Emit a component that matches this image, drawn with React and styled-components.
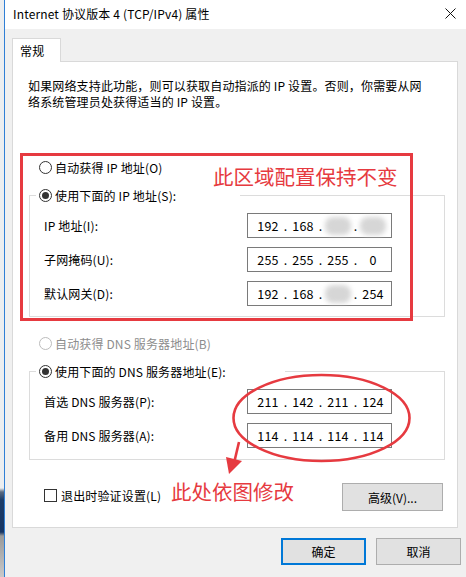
import React from "react";
import styled, { createGlobalStyle } from "styled-components";

const GlobalStyle = createGlobalStyle`
  html, body {
    margin: 0;
    padding: 0;
    background: #f0f0f0;
  }
  body {
    font-family: "Noto Sans CJK SC", "Noto Sans", sans-serif;
    font-size: 12px;
    letter-spacing: 0.15px;
    color: #000;
  }
`;

const RED = "#e63a40";

const Screen = styled.div`
  position: relative;
  display: flex;
  width: 466px;
  height: 577px;
  overflow: hidden;
`;

const DesktopEdge = styled.div`
  width: 4px;
  flex-shrink: 0;
  background: linear-gradient(
    to bottom,
    #eceef0 0px,
    #eceef0 488px,
    #5a6a80 492px,
    #1c3c68 500px,
    #163563 532px,
    #9a9a9a 536px,
    #c9c9c9 577px
  );
`;

const Window = styled.div`
  flex: 1;
  display: flex;
  flex-direction: column;
  border-left: 1px solid #2f7fd6;
  background: #f0f0f0;
`;

const TitleBar = styled.div`
  height: 29px;
  flex-shrink: 0;
  display: flex;
  align-items: center;
  justify-content: space-between;
  padding: 0 8px 0 8px;
  background: #fff;
`;

const Title = styled.span`
  font-size: 12px;
  line-height: 16px;
  margin-top: -1px;
`;

const CloseIcon = styled.svg`
  width: 11px;
  height: 11px;
  margin-right: 2px;
  margin-top: -2px;
`;

const Body = styled.div`
  padding: 9px 8px 0 7px;
  display: flex;
  flex-direction: column;
`;

const TabStrip = styled.div`
  display: flex;
`;

const Tab = styled.div`
  position: relative;
  z-index: 1;
  width: 49px;
  height: 24px;
  margin-bottom: -1px;
  padding-left: 7px;
  box-sizing: border-box;
  display: flex;
  align-items: center;
  border: 1px solid #d9d9d9;
  border-bottom: none;
  background: #fff;
  font-size: 12px;
`;

const Panel = styled.div`
  background: #fff;
  border: 1px solid #d9d9d9;
  padding: 17px 12px 16px 16px;
  display: flex;
  flex-direction: column;
`;

const Description = styled.p`
  margin: -1px 0 0 -1px;
  font-size: 12px;
  line-height: 16px;
`;

const RadioRow = styled.label`
  display: flex;
  align-items: center;
  gap: 3px;
  height: 20px;
  margin: ${(p) => p.$top}px 0 0 10px;
  color: ${(p) => (p.$disabled ? "#8d8d8d" : "#000")};
  white-space: nowrap;
`;

const RadioDot = styled.span`
  width: 13px;
  height: 13px;
  box-sizing: border-box;
  border-radius: 50%;
  border: 1px solid ${(p) => (p.$disabled ? "#bcbcbc" : "#333")};
  background: #fff;
  display: flex;
  align-items: center;
  justify-content: center;
  flex-shrink: 0;

  &::after {
    content: "";
    width: 7px;
    height: 7px;
    border-radius: 50%;
    background: #333;
    display: ${(p) => (p.$checked ? "block" : "none")};
  }
`;

const Group = styled.fieldset`
  margin: 8px 0 0 0;
  padding: 8px 52px ${(p) => p.$bottom}px 14px;
  border: 1px solid #dcdcdc;
  min-width: 0;
  display: flex;
  flex-direction: column;
  gap: 9px;
`;

const Legend = styled.legend`
  width: ${(p) => p.$width}px;
  box-sizing: border-box;
  padding: 0 0 0 3px;
  margin-left: -8px;
  height: 20px;
`;

const LegendRadio = styled(RadioRow)`
  margin: 0;
`;

const FieldRow = styled.div`
  display: flex;
  align-items: center;
  justify-content: space-between;
  height: 25px;
`;

const FieldLabel = styled.span`
  white-space: nowrap;
`;

const IpBox = styled.div`
  width: 145px;
  height: 25px;
  box-sizing: border-box;
  border: 1px solid #7a7a7a;
  background: #fff;
  display: flex;
  align-items: center;
  padding-left: 7px;
  font-size: 12.5px;
`;

const Octet = styled.span`
  width: 26px;
  text-align: center;
  position: relative;
  display: flex;
  justify-content: center;
`;

const Dot = styled.span`
  width: 9px;
  text-align: center;
`;

const Smudge = styled.span`
  display: block;
  width: 27px;
  height: 18px;
  border-radius: 8px;
  background: #d6d6d6;
  filter: blur(2.5px);
`;

const BottomRow = styled.div`
  display: flex;
  justify-content: space-between;
  align-items: flex-start;
  margin: 23px 2px 0 15px;
`;

const CheckRow = styled.label`
  display: flex;
  align-items: center;
  gap: 4px;
  height: 16px;
  margin-top: 4px;
  white-space: nowrap;
`;

const CheckBox = styled.span`
  width: 13px;
  height: 13px;
  box-sizing: border-box;
  border: 1px solid #333;
  background: #fff;
  flex-shrink: 0;
`;

const Button = styled.button`
  width: ${(p) => p.$width}px;
  height: ${(p) => p.$height}px;
  box-sizing: border-box;
  background: #e1e1e1;
  border: ${(p) => (p.$primary ? "2px solid #0078d7" : "1px solid #adadad")};
  font-family: inherit;
  font-size: 12px;
  color: #000;
  padding: 0;
`;

const Footer = styled.div`
  display: flex;
  justify-content: flex-end;
  gap: 10px;
  margin: 10px -3px 0 0;
`;

/* annotations drawn on top of the screenshot */
const MarkBox = styled.div`
  position: absolute;
  left: 20px;
  top: 153px;
  width: 393px;
  height: 168px;
  box-sizing: border-box;
  border: 3px solid ${RED};
  pointer-events: none;
`;

const Note = styled.span`
  position: absolute;
  left: ${(p) => p.$x}px;
  top: ${(p) => p.$y}px;
  font-size: 20.5px;
  line-height: 24px;
  letter-spacing: 0;
  color: ${RED};
  white-space: nowrap;
  pointer-events: none;
`;

const Marks = styled.svg`
  position: absolute;
  left: 0;
  top: 0;
  pointer-events: none;
`;

const Ip = ({ parts }) => (
  <IpBox>
    {parts.map((p, i) => (
      <React.Fragment key={i}>
        {i > 0 && <Dot>.</Dot>}
        <Octet>{p === null ? <Smudge /> : p}</Octet>
      </React.Fragment>
    ))}
  </IpBox>
);

export default function App() {
  return (
    <>
      <GlobalStyle />
      <Screen>
        <DesktopEdge />
        <Window>
          <TitleBar>
            <Title>Internet 协议版本 4 (TCP/IPv4) 属性</Title>
            <CloseIcon viewBox="0 0 11 11">
              <path d="M0.5 0.5L10.5 10.5M10.5 0.5L0.5 10.5" stroke="#111" strokeWidth="1" />
            </CloseIcon>
          </TitleBar>
          <Body>
            <TabStrip>
              <Tab>常规</Tab>
            </TabStrip>
            <Panel>
              <Description>
                如果网络支持此功能，则可以获取自动指派的 IP 设置。否则，你需要从网
                <br />
                络系统管理员处获得适当的 IP 设置。
              </Description>

              <RadioRow $top={47}>
                <RadioDot />
                自动获得 IP 地址(O)
              </RadioRow>
              <Group $bottom={10}>
                <Legend $width={204}>
                  <LegendRadio>
                    <RadioDot $checked />
                    使用下面的 IP 地址(S):
                  </LegendRadio>
                </Legend>
                <FieldRow>
                  <FieldLabel>IP 地址(I):</FieldLabel>
                  <Ip parts={["192", "168", null, null]} />
                </FieldRow>
                <FieldRow>
                  <FieldLabel>子网掩码(U):</FieldLabel>
                  <Ip parts={["255", "255", "255", "0"]} />
                </FieldRow>
                <FieldRow>
                  <FieldLabel>默认网关(D):</FieldLabel>
                  <Ip parts={["192", "168", null, "254"]} />
                </FieldRow>
              </Group>

              <RadioRow $top={16} $disabled>
                <RadioDot $disabled />
                自动获得 DNS 服务器地址(B)
              </RadioRow>
              <Group $bottom={11}>
                <Legend $width={249}>
                  <LegendRadio>
                    <RadioDot $checked />
                    使用下面的 DNS 服务器地址(E):
                  </LegendRadio>
                </Legend>
                <FieldRow>
                  <FieldLabel>首选 DNS 服务器(P):</FieldLabel>
                  <Ip parts={["211", "142", "211", "124"]} />
                </FieldRow>
                <FieldRow>
                  <FieldLabel>备用 DNS 服务器(A):</FieldLabel>
                  <Ip parts={["114", "114", "114", "114"]} />
                </FieldRow>
              </Group>

              <BottomRow>
                <CheckRow>
                  <CheckBox />
                  退出时验证设置(L)
                </CheckRow>
                <Button $width={101} $height={28}>高级(V)...</Button>
              </BottomRow>
            </Panel>
            <Footer>
              <Button $width={85} $height={27} $primary>确定</Button>
              <Button $width={85} $height={27}>取消</Button>
            </Footer>
          </Body>
        </Window>

        <MarkBox />
        <Note $x={213} $y={164}>此区域配置保持不变</Note>
        <Note $x={171} $y={479}>此处依图修改</Note>
        <Marks width="466" height="577" viewBox="0 0 466 577">
          <ellipse cx="321.5" cy="418" rx="88" ry="43" fill="none" stroke={RED} strokeWidth="2.6" />
          <path d="M239 442 L234.5 461" stroke={RED} strokeWidth="2.6" fill="none" />
          <path d="M226 457 L242 461 L229 474 Z" fill={RED} />
        </Marks>
      </Screen>
    </>
  );
}
